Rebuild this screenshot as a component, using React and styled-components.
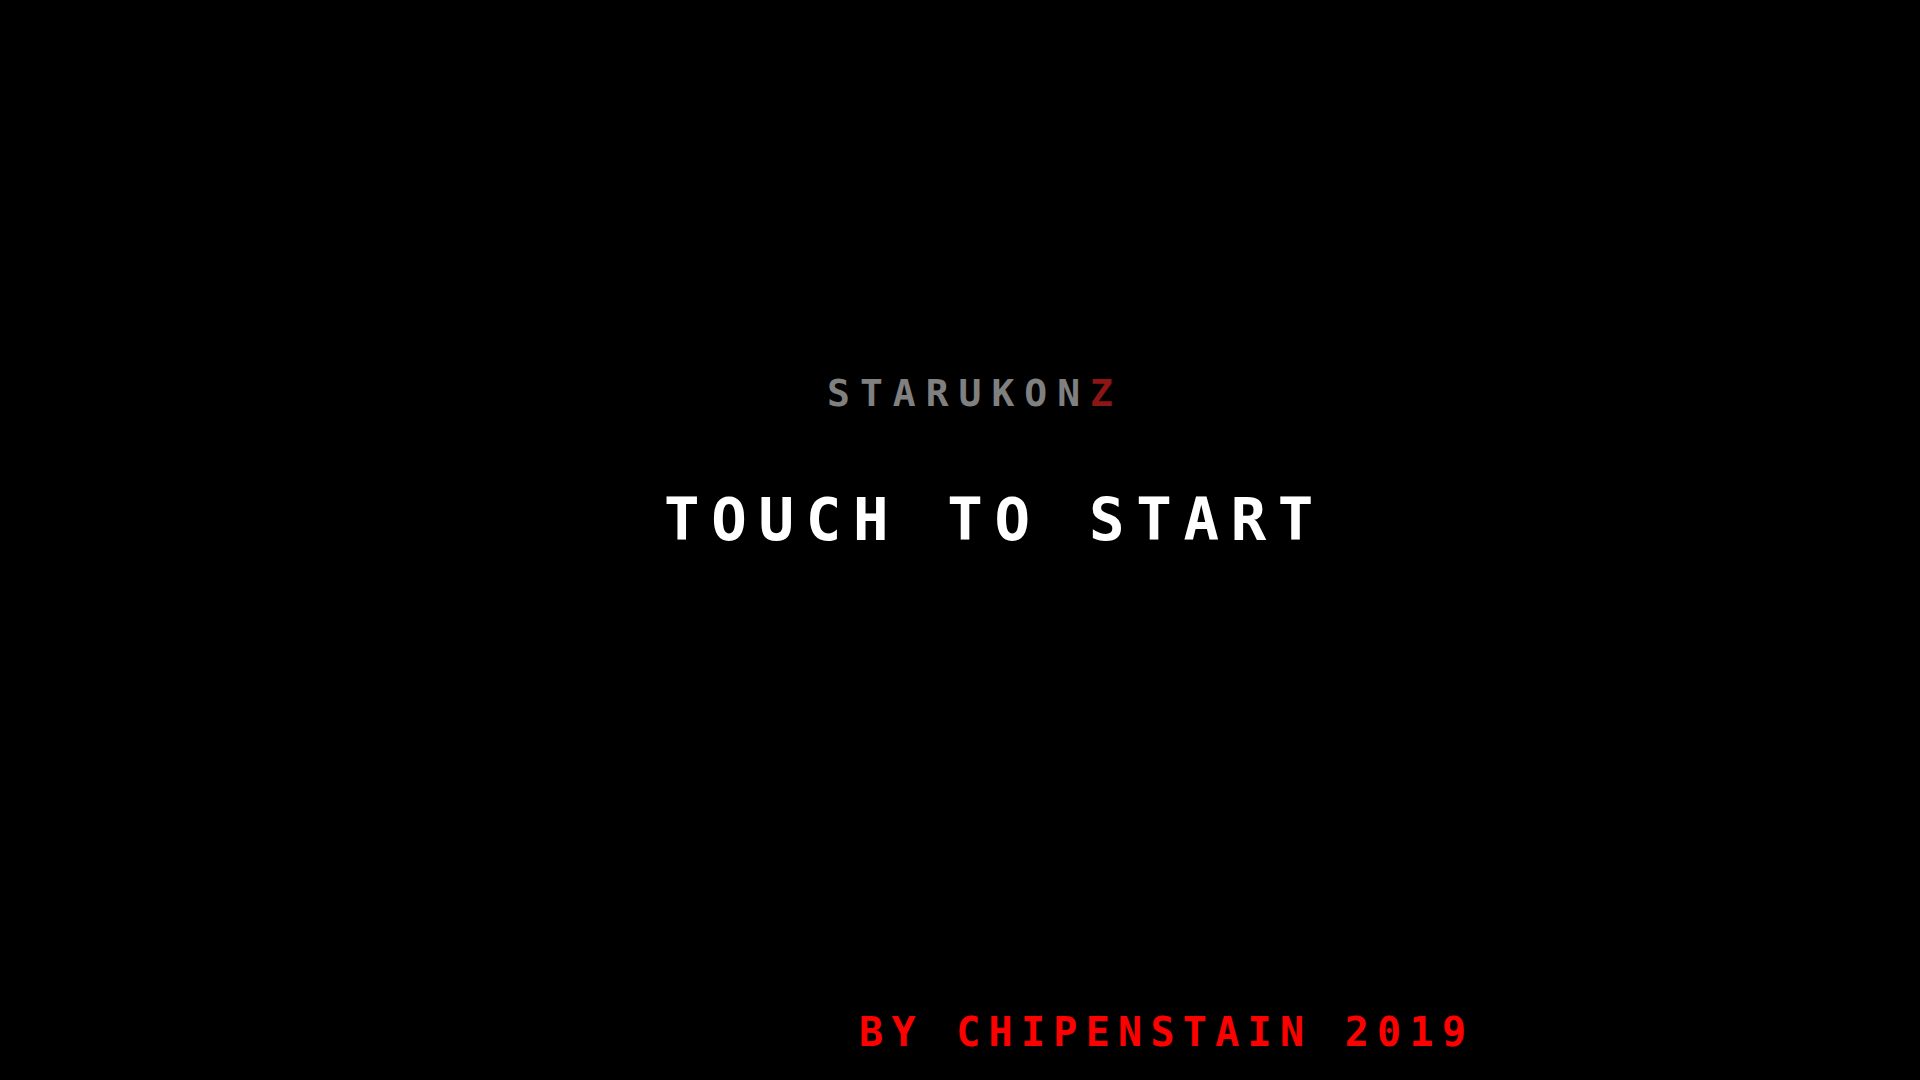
import React from "react";
import styled, { createGlobalStyle } from "styled-components";

const GlobalStyle = createGlobalStyle`
  html, body {
    margin: 0;
    padding: 0;
    background: #000;
  }
`;

const Screen = styled.div`
  width: 100vw;
  height: 100vh;
  background: #000;
  display: flex;
  flex-direction: column;
  align-items: flex-start;
  padding-top: 374px;
  box-sizing: border-box;
  overflow: hidden;
  font-family: "DejaVu Sans Mono", "Liberation Mono", monospace;
  font-weight: bold;
`;

const Line = styled.div`
  margin-left: ${p => p.left}px;
  margin-top: ${p => p.top || 0}px;
  font-size: ${p => p.size}px;
  letter-spacing: ${p => p.spacing}px;
  line-height: 1;
  white-space: nowrap;
  color: ${p => p.color};
  user-select: none;
`;

const Accent = styled.span`
  color: #8c1515;
`;

export default function App() {
  return (
    <>
      <GlobalStyle />
      <Screen>
        <Line left={827} size={38} spacing={10} color="#808080">
          STARUKON<Accent>Z</Accent>
        </Line>
        <Line left={664} top={78} size={59} spacing={11.7} color="#ffffff">
          TOUCH TO START
        </Line>
        <Line left={859} top={463} size={40} spacing={8.3} color="#ff0000">
          BY CHIPENSTAIN 2019
        </Line>
      </Screen>
    </>
  );
}
